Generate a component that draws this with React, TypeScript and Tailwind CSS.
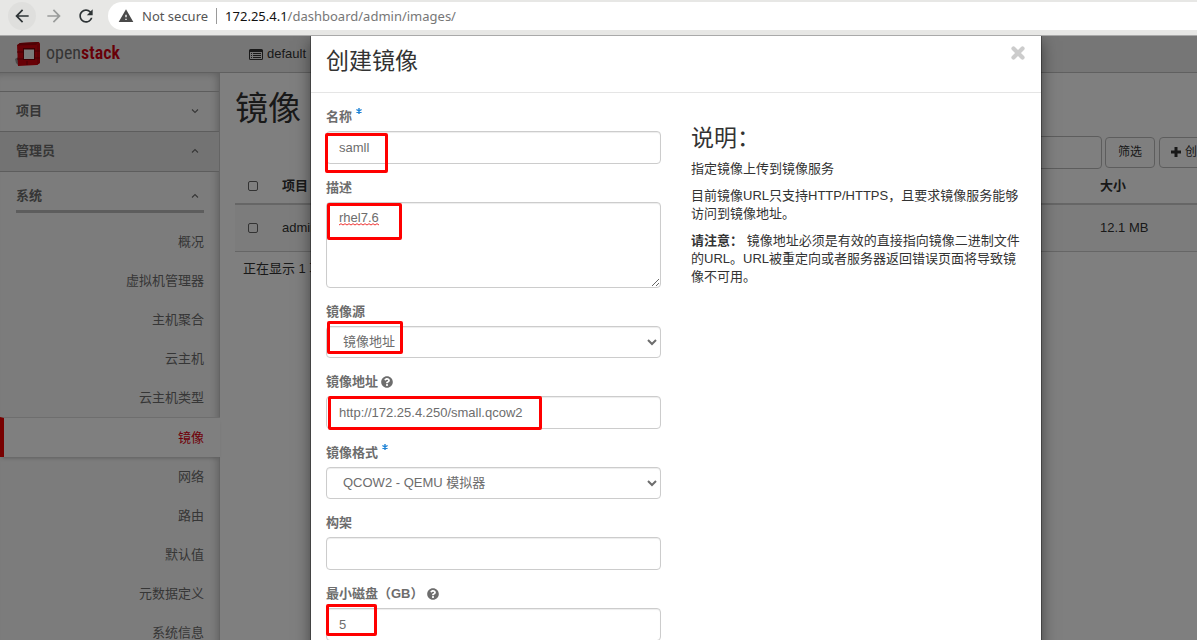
import type { ReactNode } from "react";
import { MdArrowBack, MdArrowForward, MdRefresh, MdWarning } from "react-icons/md";
import { FaQuestionCircle } from "react-icons/fa";

const menu = [
  "概况",
  "虚拟机管理器",
  "主机聚合",
  "云主机",
  "云主机类型",
  "镜像",
  "网络",
  "路由",
  "默认值",
  "元数据定义",
  "系统信息",
];

const control =
  "block w-full rounded-[4px] border border-[#ccc] bg-white px-3 text-[13px] text-[#6d6d6d] shadow-[inset_0_1px_1px_rgba(0,0,0,0.075)] outline-none";

const checkbox = "block size-[10px] appearance-none rounded-[2px] border border-[#666]";

function Chevron({ up = false }: { up?: boolean }) {
  return (
    <svg width="8" height="6" viewBox="0 0 8 6" fill="none" stroke="#6d6d6d" strokeWidth="1.1">
      <path d={up ? "M1 4.5 4 1.5 7 4.5" : "M1 1.5 4 4.5 7 1.5"} />
    </svg>
  );
}

function Logo() {
  return (
    <a href="#" className="flex items-center gap-[5px]">
      <svg width="26" height="26" viewBox="0 0 26 26">
        <path d="M0 18 3 16V24L1 22Z" fill="#999" />
        <path d="M2 4 5 2 24 1 25 3V22L22 24 3 25Z" fill="#d0000c" />
        <path d="M5 2 24 1 21 4 2 4.500Z" fill="#a00008" />
        <path d="M22 4 24.500 2V22L22 24Z" fill="#b8000a" />
        <path d="M2 11H8M2 18H8M19 10H25M19 17H25M12 20V24" stroke="#8a0008" strokeWidth="1" />
        <path d="M8 7H20V19H8Z" fill="#7a0006" />
        <path d="M9 8.500H19V18H9Z" fill="#f5f5f5" />
      </svg>
      <span className="pb-[2px] font-['Roboto_Condensed','Liberation_Sans_Narrow',sans-serif] text-[18px] leading-6 text-[#6a6a6a]">
        open<span className="font-semibold text-[#d0000f]">stack</span>
      </span>
    </a>
  );
}

function BrowserBar() {
  return (
    <div className="flex h-9 shrink-0 items-start border-b border-[#a9a9a9] bg-[#e7e7e5] pl-2 pt-[2px] font-['Noto_Sans',sans-serif] text-[13px]">
      <button aria-label="Back" className="flex size-7 items-center justify-center rounded-full bg-[#dfdfdd] text-[#2e3436]">
        <MdArrowBack size={20} />
      </button>
      <button aria-label="Forward" className="ml-1 flex size-7 items-center justify-center text-[#9a9c9b]">
        <MdArrowForward size={20} />
      </button>
      <button aria-label="Reload" className="ml-1 flex size-7 items-center justify-center text-[#2e3436]">
        <MdRefresh size={20} />
      </button>
      <div className="ml-2 flex h-7 flex-1 items-center rounded-l-full bg-white pl-[10px]">
        <MdWarning size={16} className="text-[#4a4a4a]" />
        <span className="ml-2 text-[#555]">Not secure</span>
        <span className="mx-2 h-4 w-px bg-[#9a9a9a]" />
        <span className="text-[#777]">
          <span className="text-[#111]">172.25.4.1</span>/dashboard/admin/images/
        </span>
      </div>
    </div>
  );
}

function Sidebar() {
  return (
    <nav className="w-[220px] shrink-0 border-r border-[#c8c8c8] bg-[#f9f9f9] pt-[18px] text-[#6d6d6d] shadow-[inset_-4px_3px_8px_-3px_rgba(0,0,0,0.25)]">
      <a href="#" className="flex h-10 items-center justify-between border-t border-[#bbb] px-4 pb-[2px] font-bold">
        项目
        <span className="pr-1"><Chevron /></span>
      </a>
      <a href="#" className="flex h-[41px] items-center justify-between border-y border-[#bbb] bg-[#e7e7e7] px-4 pb-[2px] font-bold">
        管理员
        <span className="pr-1"><Chevron up /></span>
      </a>
      <div className="pl-4 pr-[15px] pt-[14px]">
        <a href="#" className="flex h-[27px] items-start justify-between border-b-[3px] border-[#bbb] font-bold">
          系统
          <span className="flex h-5 items-center pr-[5px]"><Chevron up /></span>
        </a>
      </div>
      <ul className="pt-[9px]">
        {menu.map((name) => (
          <li key={name}>
            {name === "镜像" ? (
              <a
                href="#"
                className="relative -mr-px flex h-10 items-center justify-end border-l-4 border-t border-l-[#f00000] border-t-[#ddd] bg-white pr-4 text-[#e0000f] shadow-[0_3px_4px_-2px_rgba(0,0,0,0.25)]"
              >
                {name}
              </a>
            ) : (
              <a href="#" className="flex h-[39px] items-center justify-end pr-[15px]">
                {name}
              </a>
            )}
          </li>
        ))}
      </ul>
    </nav>
  );
}

function ImagesPage() {
  return (
    <div className="flex min-h-full min-w-[1352px] flex-col bg-white">
      <header className="flex h-[37px] items-center border-b border-[#c0c0c0] bg-[#ededed] pl-[15px]">
        <div className="w-[234px]">
          <Logo />
        </div>
        <svg width="14" height="11" viewBox="0 0 14 11" fill="#333">
          <path
            fillRule="evenodd"
            d="M1.500 0H12.500Q14 0 14 1.500V9.500Q14 11 12.500 11H1.500Q0 11 0 9.500V1.500Q0 0 1.500 0ZM1 3V9.500Q1 10 1.500 10H12.500Q13 10 13 9.500V3ZM2 4H3V5H2ZM4 4H12V5H4ZM2 6H3V7H2ZM4 6H12V7H4ZM2 8H3V9H2ZM4 8H12V9H4Z"
          />
        </svg>
        <span className="ml-1 text-[#333]">default</span>
      </header>
      <div className="flex flex-1">
        <Sidebar />
        <main className="flex-1 px-[15px] pt-4 text-[#333]">
          <h1 className="text-[33px] leading-10">镜像</h1>
          <div className="mt-[7px] flex h-8 items-center justify-end">
            <input aria-label="过滤" className="mr-[3px] h-[33px] w-[200px] rounded-[4px] border border-[#bbb]" />
            <button className="h-[31px] rounded-[4px] border border-[#bbb] px-3 text-[12px]">筛选</button>
            <button className="ml-1 flex h-[31px] w-[178px] items-center gap-1 rounded-[4px] border border-[#bbb] px-[11px] text-[12px]">
              <svg width="10" height="10" viewBox="0 0 10 10" stroke="#333" strokeWidth="3">
                <path d="M5 0V10M0 5H10" />
              </svg>
              创建镜像
            </button>
          </div>
          <table className="w-full table-fixed text-left">
            <thead>
              <tr className="h-9 border-b-2 border-[#ccc]">
                <th className="w-[39px] px-[13px]">
                  <input type="checkbox" aria-label="全选" className={checkbox} />
                </th>
                <th className="px-2">项目</th>
                <th className="w-[245px] px-2">大小</th>
              </tr>
            </thead>
            <tbody>
              <tr className="h-[47px] border-b border-[#ccc] bg-[#f9f9f9]">
                <td className="px-[13px]">
                  <input type="checkbox" aria-label="admin" className={checkbox} />
                </td>
                <td className="px-2">admin</td>
                <td className="px-2">12.1 MB</td>
              </tr>
            </tbody>
          </table>
          <p className="px-2 pt-[7px]">正在显示 1 项</p>
        </main>
      </div>
    </div>
  );
}

type FieldProps = {
  id: string;
  label: string;
  required?: boolean;
  help?: boolean;
  mark?: string;
  children: ReactNode;
};

function Field({ id, label, required, help, mark, children }: FieldProps) {
  return (
    <div className="mb-[14px]">
      <label htmlFor={id} className="mb-[5px] flex h-[19px] items-center font-bold text-[#6d6d6d]">
        {label}
        {required && (
          <svg width="6" height="6" viewBox="0 0 6 6" className="mb-3 ml-1" stroke="#1f83d6" strokeWidth="1.4">
            <path d="M3 0V6M.4 1.500 5.600 4.500M.4 4.500 5.600 1.500" />
          </svg>
        )}
        {help && <FaQuestionCircle size={12} className="ml-[3px]" />}
      </label>
      <div className="relative">
        {children}
        {mark && <span className={`pointer-events-none absolute rounded-[2px] border-[3px] border-[#ff0000] ${mark}`} />}
      </div>
    </div>
  );
}

function CreateImageModal() {
  return (
    <div role="dialog" aria-label="创建镜像" className="mx-auto min-h-full w-[730px] bg-white shadow-[0_0_0_1px_rgba(0,0,0,0.3),0_5px_15px_rgba(0,0,0,0.5)]">
      <div className="flex h-[57px] items-start justify-between border-b border-[#e5e5e5] px-[15px]">
        <h3 className="pt-[9px] text-[23px] leading-8 text-[#333]">创建镜像</h3>
        <button aria-label="关闭" className="mt-[9px] p-[1px]">
          <svg width="14" height="14" viewBox="0 0 14 14" stroke="#ccc" strokeWidth="4.200" strokeLinecap="round">
            <path d="M2.500 2.500 11.500 11.500M11.500 2.500 2.500 11.500" />
          </svg>
        </button>
      </div>
      <div className="grid grid-cols-2 gap-[30px] px-[15px] pt-[14px]">
        <form>
          <Field id="name" label="名称" required mark="-left-px top-[2px] h-10 w-[63px]">
            <input id="name" defaultValue="samll" className={`${control} h-[33px]`} />
          </Field>
          <Field id="description" label="描述" mark="left-px top-px h-[37px] w-[75px]">
            <textarea
              id="description"
              spellCheck={false}
              defaultValue="rhel7.6"
              className={`${control} h-[86px] resize-y py-[6px] leading-[18px]`}
            />
            <svg width="40" height="3" viewBox="0 0 40 3" fill="none" stroke="#e33" className="absolute left-[13px] top-[21px]">
              <path d="M0 2 2 .7 4 2 6 .7 8 2 10 .7 12 2 14 .7 16 2 18 .7 20 2 22 .7 24 2 26 .7 28 2 30 .7 32 2 34 .7 36 2 38 .7 40 2" />
            </svg>
          </Field>
          <Field id="source" label="镜像源" mark="left-px -top-[5px] h-[33px] w-[76px]">
            <select id="source" className={`${control} h-8 pb-px`}>
              <option>镜像地址</option>
            </select>
          </Field>
          <Field id="location" label="镜像地址" help mark="left-[2px] top-0 h-[34px] w-[214px]">
            <input id="location" defaultValue="http://172.25.4.250/small.qcow2" className={`${control} h-[33px]`} />
          </Field>
          <Field id="format" label="镜像格式" required>
            <select id="format" className={`${control} h-8 pb-px`}>
              <option>QCOW2 - QEMU 模拟器</option>
            </select>
          </Field>
          <Field id="arch" label="构架">
            <input id="arch" className={`${control} h-[33px]`} />
          </Field>
          <Field id="disk" label="最小磁盘（GB）" help mark="left-0 -top-1 h-8 w-[51px]">
            <input id="disk" defaultValue="5" className={`${control} h-[33px]`} />
          </Field>
        </form>
        <div className="pt-[18px] leading-[18px] text-[#333]">
          <h3 className="mb-[9px] text-[23px] leading-[26px]">说明：</h3>
          <p className="mb-[9px]">指定镜像上传到镜像服务</p>
          <p className="mb-[9px]">目前镜像URL只支持HTTP/HTTPS，且要求镜像服务能够访问到镜像地址。</p>
          <p>
            <strong>请注意：</strong> 镜像地址必须是有效的直接指向镜像二进制文件的URL。URL被重定向或者服务器返回错误页面将导致镜像不可用。
          </p>
        </div>
      </div>
    </div>
  );
}

export default function App() {
  return (
    <div className="flex h-screen flex-col overflow-hidden font-['Liberation_Sans','Noto_Sans_CJK_SC',sans-serif] text-[13px] leading-5">
      <BrowserBar />
      <div className="relative flex-1 overflow-hidden">
        <ImagesPage />
        <div className="absolute inset-y-0 left-0 w-full min-w-[1352px] overflow-hidden bg-black/50">
          <CreateImageModal />
        </div>
      </div>
    </div>
  );
}
